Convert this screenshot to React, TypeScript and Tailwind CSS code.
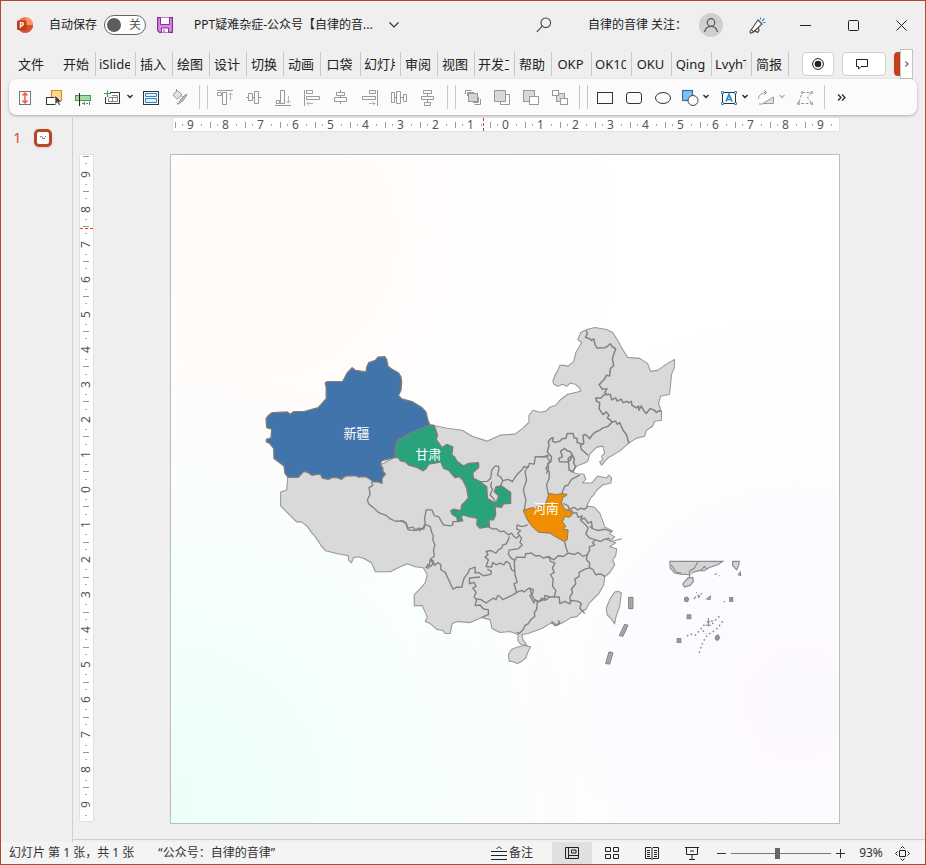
import type { ReactNode } from "react";

const tabs = [
  { label: "文件", width: "w-[54px]", line: false },
  { label: "开始", width: "w-[37px]", line: true },
  { label: "iSlide", width: "w-10", line: true },
  { label: "插入", width: "w-[37px]", line: true },
  { label: "绘图", width: "w-[37px]", line: true },
  { label: "设计", width: "w-[37px]", line: true },
  { label: "切换", width: "w-[37px]", line: true },
  { label: "动画", width: "w-[37px]", line: true },
  { label: "口袋", width: "w-10", line: true },
  { label: "幻灯片", width: "w-10", line: true },
  { label: "审阅", width: "w-[37px]", line: true },
  { label: "视图", width: "w-[37px]", line: true },
  { label: "开发工具", width: "w-10", line: true },
  { label: "帮助", width: "w-[37px]", line: true },
  { label: "OKP", width: "w-10", line: true },
  { label: "OK10", width: "w-10", line: true },
  { label: "OKU", width: "w-10", line: true },
  { label: "Qing", width: "w-10", line: true },
  { label: "LvyhT", width: "w-10", line: true },
  { label: "简报", width: "w-[37px]", line: true },
];

const marks = [9, 8, 7, 6, 5, 4, 3, 2, 1, 0, 1, 2, 3, 4, 5, 6, 7, 8, 9];

function Tool({ label, narrow, children }: { label: string; narrow?: boolean; children: ReactNode }) {
  return (
    <button aria-label={label} className={`flex h-7 shrink-0 items-center justify-center ${narrow ? "w-[25px]" : "w-[29px]"}`}>
      <svg width="17" height="18" viewBox="0 0 17 18" fill="none" stroke="#999999">
        {children}
      </svg>
    </button>
  );
}

function Caret({ label, color = "#222222" }: { label: string; color?: string }) {
  return (
    <button aria-label={label} className="mr-0.5 -ml-0.5 flex h-7 w-2.5 shrink-0 items-center justify-center">
      <svg width="8" height="6" viewBox="0 0 8 6" fill="none" stroke={color} strokeWidth="1.3">
        <path d="M1.5 1 L4 3.5 L6.5 1" />
      </svg>
    </button>
  );
}

function DoubleLine() {
  return (
    <div className="flex w-4 shrink-0 justify-center gap-[7px]">
      <div className="h-6 w-px bg-[#c8c8c8]" />
      <div className="h-6 w-px bg-[#c8c8c8]" />
    </div>
  );
}

function TitleBar() {
  return (
    <header className="flex h-12 items-center pl-4 text-xs text-[#222222]">
      <svg width="16" height="16" viewBox="0 0 16 16" className="shrink-0">
        <circle cx="8.2" cy="8" r="7.8" fill="#ed6c47" />
        <path d="M8 .2 A7.8 7.8 0 0 1 16 8 H8z" fill="#ff8f6b" />
        <path d="M.6 8 H16 A7.8 7.8 0 0 1 1 11z" fill="#d35230" />
        <rect x="0" y="3.5" width="9.5" height="9.5" rx="1" fill="#c13b1b" />
        <text x="2.2" y="11" fontSize="8" fontWeight="700" fill="white">P</text>
      </svg>
      <span id="autosave" className="ml-4 shrink-0">自动保存</span>
      <button
        role="switch"
        aria-checked="false"
        aria-labelledby="autosave"
        className="ml-[7px] flex h-5 w-[42px] shrink-0 items-center justify-between rounded-full border border-[#666666] bg-white pr-1 pl-0.5 text-xs leading-4"
      >
        <span className="size-3.5 rounded-full bg-[#5d5d5d]" />
        <span className="text-[#555555]">关</span>
      </button>
      <button aria-label="保存" className="ml-[11px] shrink-0">
        <svg width="16" height="16" viewBox="0 0 16 16" fill="none" stroke="#8e2a9c">
          <path d="M.6 .6 H15.4 V15.4 H2.6 L.6 13.4z" fill="#d58fd8" strokeWidth="1.2" />
          <path d="M3.5 .6 V7.5 H12.5 V.6" fill="white" />
          <path d="M4.5 15.4 V11 H11.5 V15.4" fill="white" />
          <path d="M7 12.5 V15" />
        </svg>
      </button>
      <button className="ml-[21px] flex items-center gap-4 whitespace-nowrap">
        PPT疑难杂症-公众号【自律的音...
        <svg width="10" height="6" viewBox="0 0 10 6" fill="none" stroke="#333333" strokeWidth="1.2">
          <path d="M.5 .5 L5 5 L9.5 .5" />
        </svg>
      </button>
      <button aria-label="搜索" className="mr-9 ml-auto shrink-0">
        <svg width="16" height="16" viewBox="0 0 16 16" fill="none" stroke="#444444" strokeWidth="1.1">
          <circle cx="9.8" cy="5.8" r="4.8" />
          <path d="M6.3 9.2 L.8 14.8" />
        </svg>
      </button>
      <span className="shrink-0">自律的音律 关注：</span>
      <button aria-label="账户" className="ml-3 flex size-6 shrink-0 items-center justify-center rounded-full bg-[#d0d0d0]">
        <svg width="16" height="16" viewBox="0 0 16 16" fill="none" stroke="#555555" strokeWidth="1.2">
          <circle cx="8" cy="5.5" r="3.8" />
          <path d="M1.5 15 C2.5 11 5 9.3 8 9.3 S13.5 11 14.5 15" />
        </svg>
      </button>
      <button aria-label="画笔" className="ml-2.5 flex h-12 w-12 shrink-0 items-center justify-center">
        <svg width="17" height="17" viewBox="0 0 17 17" fill="none" stroke="#444444" strokeWidth="1.1">
          <path d="M9 3 L13 7 L4 15.5 L1.5 16 L1 14.5z" fill="white" />
          <path d="M2.5 13 L5 15 M5.5 13.5 L8.5 15.5 L10 13.5 L9.5 10.5" />
          <path d="M11.5 .5 V2.5 M13 4 L15.5 1.5 M14 5.5 H16.5" stroke="#2b88d8" />
        </svg>
      </button>
      <button aria-label="最小化" className="flex h-12 w-12 shrink-0 items-center justify-center">
        <svg width="11" height="11" viewBox="0 0 11 11" stroke="#222222"><path d="M0 5.5 H11" /></svg>
      </button>
      <button aria-label="最大化" className="flex h-12 w-12 shrink-0 items-center justify-center">
        <svg width="11" height="11" viewBox="0 0 11 11" fill="none" stroke="#222222"><rect x=".5" y=".5" width="10" height="10" rx="1" /></svg>
      </button>
      <button aria-label="关闭" className="flex h-12 w-12 shrink-0 items-center justify-center">
        <svg width="11" height="11" viewBox="0 0 11 11" stroke="#222222"><path d="M.5 .5 L10.5 10.5 M10.5 .5 L.5 10.5" /></svg>
      </button>
    </header>
  );
}

function Ribbon() {
  return (
    <nav className="flex h-[30px] items-center pl-1 text-[13px] leading-5 text-[#222222]">
      {tabs.map((tab) => (
        <button
          key={tab.label}
          className={`h-6 shrink-0 ${tab.width} ${tab.line ? "border-r border-[#c8c8c8]" : ""}`}
        >
          <span className="mr-[5px] ml-[3px] block overflow-hidden whitespace-nowrap">{tab.label}</span>
        </button>
      ))}
      <button aria-label="录制" className="ml-auto flex h-6 w-8 shrink-0 items-center justify-center rounded border border-[#d2d2d2] bg-white">
        <svg width="12" height="12" viewBox="0 0 12 12" fill="none" stroke="#222222">
          <circle cx="6" cy="6" r="5.4" />
          <circle cx="6" cy="6" r="3.3" fill="#222222" stroke="none" />
        </svg>
      </button>
      <button aria-label="批注" className="ml-2 flex h-6 w-11 shrink-0 items-center justify-center rounded border border-[#d2d2d2] bg-white pr-1">
        <svg width="12" height="12" viewBox="0 0 12 12" fill="none" stroke="#222222">
          <path d="M.5 1.5 H11.5 V8.5 H5 L2.5 11 V8.5 H.5z" />
        </svg>
      </button>
      <button aria-label="共享" className="ml-2 h-6 w-1.5 shrink-0 rounded-l bg-[#c43e1c]" />
      <button aria-label="更多选项卡" className="mr-3 flex h-[30px] w-[13px] shrink-0 items-center justify-center border border-[#c4c4c4] bg-white">
        <svg width="4" height="6" viewBox="0 0 4 6" fill="none" stroke="#666666" strokeWidth="1.2"><path d="M.5 .5 L3 3 L.5 5.5" /></svg>
      </button>
    </nav>
  );
}

function Toolbar() {
  return (
    <div className="mx-2 flex h-9 items-center rounded-lg bg-[#fbfbfb] pl-0.5 shadow-[0_1px_3px_rgba(0,0,0,0.28)]">
      <Tool label="高度">
        <rect x="2.5" y="3.5" width="11" height="13" stroke="#777777" />
        <path d="M8 5.5 V14.5 M5.5 7.5 L8 5 L10.5 7.5 M5.5 12.5 L8 15 L10.5 12.5" stroke="#f4573b" strokeWidth="1.5" />
      </Tool>
      <Tool label="选择窗格">
        <path d="M5.5 9 V2.5 H15.5 V12.5 H13" fill="#fcd88a" stroke="#e08a1e" strokeWidth="1.2" />
        <rect x=".5" y="9.5" width="9" height="7" stroke="#333333" fill="white" />
        <path d="M9 7 V16.5 L11.3 14.5 L13 17.5 L14.5 16.7 L13 14 H16z" fill="#444444" stroke="white" strokeWidth=".6" />
      </Tool>
      <Tool label="对齐形状">
        <rect x=".5" y="7.5" width="15" height="5" fill="#a3dba8" stroke="#3f9f57" />
        <path d="M4.5 5 V18" stroke="#222222" />
        <path d="M7 15.5 H9 M11 15.5 H13 M9.5 13.5 V17 M14.5 13.5 V17" stroke="#777777" />
      </Tool>
      <Tool label="新建幻灯片">
        <path d="M6 4.5 H15.5 V15.5 H1.5 V9" stroke="#333333" />
        <path d="M3.5 2.5 V9 M0 5.5 H7" stroke="#3f9f57" strokeWidth="1.2" />
        <path d="M4.5 10.5 V13.5 H13.5 V7.5 H8 M8.5 9.5 V13.5 M4.5 9.5 H13.500" stroke="#888888" />
      </Tool>
      <Caret label="新建幻灯片选项" />
      <Tool label="版式">
        <rect x=".5" y="3.5" width="15" height="13" stroke="#333333" />
        <path d="M2.5 5.500 H13.500 V8.500 H2.500z M2.500 10.500 H13.500 V14.500 H2.500z" fill="#e3f1fb" stroke="#2b88c8" />
      </Tool>
      <Tool label="格式刷">
        <path d="M1 6.5 L5.5 2.5 L10 7 L5 11 L1 7 M4.5 3.5 V1 M10 8 L11.5 11" fill="#e1e1e1" />
        <path d="M5 16 C7 16.5 8 14.5 7 13 L9 14.5z M8 12 L14 6 L15 7 L10 14z" fill="#bbbbbb" />
      </Tool>
      <DoubleLine />
      <Tool label="顶端对齐">
        <path d="M0 2.5 H16 M.5 4.5 H4.5 V7.5 H.5z M5.5 4.5 H9.5 V16.5 H5.5z" />
        <path d="M13.5 12 V5 M11.5 7 L13.5 5 L15.5 7" stroke="#b4b4b4" />
      </Tool>
      <Tool label="垂直居中">
        <path d="M0 9.5 H2.5 M6.5 9.5 H8.5 M12.5 9.5 H15.5 M2.5 5.5 H6.5 V12.5 H2.5z M8.5 3.5 H12.5 V15.5 H8.5z" />
      </Tool>
      <Tool label="底端对齐">
        <path d="M0 17.5 H16 M1.5 12.5 H4.5 V15.5 H1.5z M5.5 2.5 H9.5 V15.5 H5.5z" />
        <path d="M13.5 8 V15 M11.5 13 L13.5 15 L15.5 13" stroke="#b4b4b4" />
      </Tool>
      <Tool label="左对齐">
        <path d="M.5 2 V18 M2.5 2.5 H8.5 V5.5 H2.5z M2.5 8.5 H15.5 V11.5 H2.5z" />
        <path d="M9 15.5 H3 M5 13.5 L3 15.5 L5 17.5" stroke="#b4b4b4" />
      </Tool>
      <Tool label="水平居中">
        <path d="M7.5 2 V4.5 M7.5 7.5 V9.5 M7.5 14 V16 M3.5 4.5 H11.5 V7.5 H3.5z M1.5 9.5 H13.5 V13.5 H1.5z" />
      </Tool>
      <Tool label="右对齐">
        <path d="M15.5 2 V18 M7.5 2.5 H13.5 V5.5 H7.5z M.5 8.5 H13.5 V11.5 H.5z" />
        <path d="M7 15.5 H13 M11 13.5 L13 15.5 L11 17.5" stroke="#b4b4b4" />
      </Tool>
      <Tool label="横向分布">
        <path d="M.5 4.5 H3.5 V14.5 H.5z M5.5 3.5 H9.5 V15.5 H5.5z M12.5 6.5 H15.5 V13.5 H12.5z M3.5 9.5 H5.5 M9.5 9.5 H12.5" />
      </Tool>
      <Tool label="纵向分布">
        <path d="M3.5 2.5 H11.5 V5.5 H3.5z M1.5 8.5 H13.5 V11.5 H1.5z M4.5 14.5 H10.5 V17.5 H4.5z M7.5 5.5 V8.5 M7.5 11.5 V14.5" />
      </Tool>
      <DoubleLine />
      <Tool label="置于顶层">
        <path d="M.5 6 V2.5 H6.5 M2.5 8 V4.5 H9 M15.5 11 V16.5 H9.5 M13.5 9 V14.5 H8" />
        <rect x="3.5" y="5.5" width="9" height="8" fill="#d4d4d4" />
      </Tool>
      <Tool label="上移一层">
        <path d="M12 6.5 H15.5 V16.5 H6.5 V13" />
        <rect x=".5" y="2.5" width="11" height="11" fill="#d8d8d8" />
      </Tool>
      <Tool label="下移一层">
        <rect x=".5" y="2.5" width="11" height="11" fill="#d8d8d8" />
        <rect x="6.5" y="8.5" width="9" height="8" fill="white" />
      </Tool>
      <Tool label="组合">
        <rect x="4.5" y="5.5" width="8" height="8" fill="#d8d8d8" />
        <rect x=".5" y="2.5" width="6" height="5" fill="white" />
        <rect x="8.5" y="10.5" width="7" height="6" fill="white" />
      </Tool>
      <DoubleLine />
      <Tool label="矩形"><rect x=".5" y="4.5" width="15" height="11" stroke="#333333" /></Tool>
      <Tool label="圆角矩形"><rect x=".5" y="4.5" width="15" height="11" rx="2.5" stroke="#333333" /></Tool>
      <Tool label="椭圆"><ellipse cx="8" cy="10" rx="7.5" ry="5.5" stroke="#333333" /></Tool>
      <Tool label="形状" narrow>
        <rect x=".5" y="2.5" width="10" height="10" fill="#86bdec" stroke="#1f74b8" strokeWidth="1.2" />
        <circle cx="11" cy="12.5" r="5" fill="white" stroke="#444444" />
      </Tool>
      <Caret label="形状选项" />
      <div className="flex items-center pl-1">
        <Tool label="文本框" narrow>
          <rect x="1.5" y="4.5" width="13" height="11" stroke="#333333" />
          <path d="M.5 3.5 H2.5 V5.5 H.5z M13.5 3.5 H15.5 V5.5 H13.5z M.5 14.5 H2.5 V16.5 H.5z M13.5 14.5 H15.5 V16.5 H13.5z" fill="white" stroke="#2b88c8" />
          <path d="M5 13.5 L8 6.5 L11 13.5 M6 11.5 H10" stroke="#2b88c8" strokeWidth="1.7" />
        </Tool>
        <Caret label="文本框选项" />
      </div>
      <div className="flex items-center pl-0.5">
        <Tool label="旋转" narrow>
          <path d="M5 15.5 H15.5 V9z" fill="#e1e1e1" />
          <path d="M1 16 H5 M.5 11 C.5 7 4 4.5 8.5 4.5 M6 2 L8.5 4.5 L6 7" />
        </Tool>
        <Caret label="旋转选项" color="#b4b4b4" />
      </div>
      <div className="flex items-center pl-0.5">
        <Tool label="编辑顶点">
          <path d="M2 14 L5 5 M5 4.5 H14 M14 5 L10.5 9.5 L14.500 15 M4 15.5 H14" strokeDasharray="3 1.5" />
          <path d="M4 3 H6 V6 H4z M13.5 3 H16 V6 H13.5z M0 14 H3 V17 H0z M13.5 14 H16 V17 H13.5z" fill="#b4b4b4" stroke="none" />
        </Tool>
      </div>
      <div className="mx-1 h-6 w-px bg-[#c8c8c8]" />
      <button aria-label="更多命令" className="flex h-7 w-6 shrink-0 items-center justify-center">
        <svg width="9" height="7" viewBox="0 0 9 7" fill="none" stroke="#222222" strokeWidth="1.2"><path d="M1 .5 L4 3.5 L1 6.5 M5 .5 L8 3.5 L5 6.5" /></svg>
      </button>
    </div>
  );
}

function TopRuler() {
  return (
    <div className="relative flex h-[15px] border border-[#e1e1e1] bg-white pl-px text-xs text-[#555555]">
      {marks.map((n, i) => (
        <div key={i} className="grid flex-1 grid-cols-[3px_10px_7px_1fr] items-center justify-items-center">
          <span className="h-1.5 w-px bg-[#999999]" />
          <span className="h-0.5 w-px bg-[#aaaaaa]" />
          <span className="leading-3">{n}</span>
          <span className="h-0.5 w-px bg-[#aaaaaa]" />
        </div>
      ))}
      <div className="absolute inset-y-0 left-[46.6%] border-l border-dashed border-[#c43e1c]" />
    </div>
  );
}

function SideRuler() {
  return (
    <div className="relative mb-0.5 flex flex-col border border-[#e1e1e1] bg-white pr-0.5 text-xs text-[#555555]">
      {marks.map((n, i) => (
        <div key={i} className="grid flex-1 grid-rows-[3px_1fr_9px_1fr] items-center justify-items-center">
          <span className="h-px w-1.5 bg-[#999999]" />
          <span className="h-px w-0.5 bg-[#aaaaaa]" />
          <span className="-rotate-90 leading-[9px]">{n}</span>
          <span className="h-px w-0.5 bg-[#aaaaaa]" />
        </div>
      ))}
      <div className="absolute inset-x-0 top-[10.9%] border-t border-dashed border-[#e8401c]" />
    </div>
  );
}

const mainland =
  "M432 425 L447 428 L462 430 L472 436 L487 441 L500 435 L515 434 L523 428 L529 422 L529 415 L533 410 L540 412 L546 411 L550 407 L556 405 L560 400 L568 394 L581 391 L580 388 L576 384 L570 383 L567 386 L563 384 L558 386 L554 384 L553 381 L555 375 L557 372 L560 365 L565 365 L568 366 L574 361 L576 352 L582 342 L578 339 L581 332 L587 329 L595 327 L607 329 L613 332 L618 340 L623 349 L628 357 L640 358 L648 363 L651 371 L658 370 L668 363 L675 359 L675 367 L672 374 L671 385 L670 394 L661 396 L659 403 L662 412 L662 420 L655 421 L653 426 L647 430 L645 436 L637 438 L629 443 L620 451 L608 458 L602 465 L600 462 L603 460 L602 456 L605 453 L603 446 L597 447 L590 454 L588 461 L585 463 L577 466 L572 472 L578 474 L584 474 L586 479 L583 483 L592 483 L598 476 L607 478 L609 475 L612 478 L611 483 L603 485 L597 490 L594 495 L591 498 L587 506 L594 507 L600 513 L603 521 L605 527 L613 531 L610 534 L615 537 L612 540 L607 540 L616 543 L610 547 L617 549 L616 556 L613 560 L615 565 L610 573 L605 577 L604 585 L599 594 L595 598 L589 604 L586 610 L583 611 L577 617 L571 618 L565 622 L557 626 L554 623 L550 624 L542 629 L528 634 L522 635 L523 640 L527 646 L521 645 L518 641 L518 635 L510 632 L500 633 L492 629 L490 620 L482 618 L470 623 L458 622 L452 624 L450 634 L445 634 L443 631 L437 630 L430 624 L425 622 L427 618 L426 615 L422 606 L414 606 L414 595 L420 589 L425 583 L427 575 L423 568 L415 567 L407 564 L400 567 L390 572 L375 572 L371 563 L364 559 L358 557 L353 558 L351 563 L348 560 L348 556 L337 554 L325 551 L320 545 L315 537 L312 534 L307 527 L301 522 L296 522 L288 514 L280 506 L280 492 L286 490 L287 478 L290 465 L380 465 L395 457 L410 440z";

function ChinaMap() {
  return (
    <svg viewBox="170 154 670 670" className="block w-full" role="img" aria-label="中国地图">
      <g fill="#d9d9d9" stroke="#999999" strokeWidth="1.1" strokeLinejoin="round" strokeLinecap="round">
        <path d={mainland} />
        <g transform="translate(400 520) scale(.33333)" strokeWidth="3.3">
          <path d="M375 378 L392 382 L385 395 L378 415 L363 427 L352 432 L340 427 L328 425 L325 405 L335 390 L350 383z" />
        </g>
        <g transform="translate(510 460) scale(.33333)" strokeWidth="3.3">
          <path d="M315 397 L325 395 L335 400 L330 440 L318 475 L315 493 L305 478 L292 465 L290 445 L300 420z" />
          <path d="M305 245 L335 237" />
        </g>
      </g>

      {/* province borders, north-east */}
      <g transform="translate(540 315) scale(.33333)" fill="none" stroke="#828282" strokeWidth="4.5" strokeLinejoin="round">
        <path d="M140 45 L143 55 L137 66 L150 70 L155 75 L162 70 L166 88 L172 98 L195 97 L203 93 L212 85 L218 94 L228 100 L223 115 L218 130 L222 150 L212 160 L210 182 L200 180 L195 190 L178 208 L188 222 L202 220 L195 232 L203 238 L212 238 L216 254 L228 248 L232 257 L245 252 L250 262 L262 258 L268 263 L275 258 L277 270 L290 278 L297 272 L298 285 L305 272 L313 287 L320 295 L332 280 L345 285 L350 292 L357 287 L367 288" />
        <path d="M203 238 L190 240 L185 248 L168 248 L170 258 L180 262 L178 280 L190 298 L200 290 L208 300 L203 308 L218 320 L228 318 L233 328 L240 322 L250 345 L260 358 L268 385" />
        <path d="M218 320 L205 333 L190 338 L180 345 L165 352 L155 362 L150 371 L137 358 L130 360 L132 385 L122 390 L125 403 L145 420" />
        <path d="M128 387 L112 382 L112 370 L103 368 L100 355 L82 355 L78 370 L68 370 L60 378 L45 382 L38 378 L40 368 L33 370 L25 380 L28 390 L22 410 L35 425 L33 440 L24 445 L26 458 L20 475" />
        <path d="M75 400 L82 407 L92 410 L98 420 L85 430 L86 441 L60 440 L56 430 L68 425 L62 408z M98 420 L104 432 L101 442 L107 455 L100 470 L88 465 L86 440 L92 434z M0 424 L14 426 L25 422" />
      </g>

      {/* north and centre */}
      <g transform="translate(400 410) scale(.33333)" fill="none" stroke="#828282" strokeWidth="4" strokeLinejoin="round">
        <path d="M240 215 L262 214 L272 205 L275 180 L285 168 L295 168 L297 178 L292 195 L303 202 L308 212 L325 208 L337 215 L350 195 L365 180 L372 170 L385 172 L388 160 L403 162 L406 140 L430 140 L445 135" />
        <path d="M275 215 L272 230 L278 238 L270 255 L280 265 L285 275 M308 212 L300 232 M385 167 L375 185 L380 210 L370 240 L378 270 L372 305" />
        <path d="M445 135 L442 142 L450 155 L438 175 L448 185 L448 205 L440 225 L445 252 M540 195 L515 208 L505 225 L495 228 L485 252 L500 258" />
        <path d="M265 352 L280 358 L288 356 L300 365 L312 364 L325 375 L335 370 L342 380 L350 385 L360 375 M384 345 L366 350 L352 345 L350 357 L362 362 L353 370 L365 385 L360 398 L367 405 L355 417 L328 420 L325 432 L335 448" />
        <path d="M75 345 L73 325 L78 300 L95 300 L103 318 L115 320 L130 345 L150 348 L158 345 L158 335 L175 335" />
        <path d="M0 332 L18 340 L22 355 L38 352 L48 362 L55 355 L70 358 L75 345" />
      </g>

      {/* Tibet and Qinghai */}
      <g transform="translate(265 460) scale(.33333)" fill="none" stroke="#828282" strokeWidth="4" strokeLinejoin="round">
        <path d="M318 65 L322 76 L311 83 L314 103 L306 120 L310 132 L324 143 L340 158 L362 166 L375 177 L391 184 L415 183 L423 193 L428 209 L447 212 L460 206 L462 213 L475 202 L478 193" />
        <path d="M478 193 L495 200 L500 220 L504 225 L503 240 L509 255 L505 270 L507 290 L496 297 L503 312 L497 320 L488 314 L483 323" />
      </g>

      {/* south-west */}
      <g transform="translate(400 520) scale(.33333)" fill="none" stroke="#828282" strokeWidth="4.2" strokeLinejoin="round">
        <path d="M75 143 L85 145 L90 120 L98 122 L103 137 L113 128 L122 135 L122 150 L135 158 L143 175 L150 190 L158 208 L170 202 L185 203 L188 188 L192 175 L205 158 L208 148 L225 142 L225 160 L235 158 L250 168 L272 164 L274 155 L262 148" />
        <path d="M328 50 L325 60 L318 73 L308 75 L305 85 L295 90 L288 100 L270 92 L258 95 L264 105 L255 112 L265 120 L258 140 L275 142 L278 128 L288 135 L300 130 L312 135 L318 125 L328 130 L335 150 L345 155" />
        <path d="M333 115 L345 122 M240 172 L208 175 L208 192 L222 188 L228 200 L218 205 L228 218 L222 232 L230 240 L225 258 L240 256 L250 268 L265 270 L265 285 L245 293" />
        <path d="M228 238 L243 240 L258 250 L280 235 L288 240 L293 228 L300 230 L308 240 L325 232 L340 225 L350 218 L342 192 L352 188 L345 165 L343 125 L350 112 L375 113 L377 102 L395 100 L405 108 L420 108 L430 115 L450 110" />
        <path d="M350 218 L365 212 L372 217 L388 205 L400 210 L398 222 L390 228 L402 250 L405 240 L415 248 L427 235 L435 242 L450 232" />
        <path d="M412 248 L410 270 L403 277 L405 290 L393 300 L385 312 L375 318 L370 330 L358 342 L350 338" />
      </g>

      {/* south-east */}
      <g transform="translate(510 460) scale(.33333)" fill="none" stroke="#828282" strokeWidth="4.2" strokeLinejoin="round">
        <path d="M118 292 L122 305 L135 310 L128 325 L133 338 L122 345 L130 358 L128 380 L138 392 L133 412 L148 412 L150 432 L165 425 L180 433 L185 422 L205 425 L215 432 L210 445 L225 462" />
        <path d="M105 292 L118 292 L132 300 L145 288 L160 290 L175 280 L168 262 L165 245 M175 280 L195 284 L205 278 L220 290 L232 285 L240 272 L238 262 L255 255 L248 248 L258 240 L240 235 L228 222 L235 205 L228 195 L212 180 L218 168 L205 172 L200 158 L190 160 L185 150" />
        <path d="M160 130 L175 138 L178 148 L192 142 L205 150 L212 145 L225 148 L235 138 M258 240 L272 245 L285 238 L300 235 M215 178 L225 175 L235 190 L245 185 L248 205 L240 200 M245 205 L265 212 L285 208 L305 215" />
        <path d="M232 285 L230 300 L240 310 L238 325 L225 328 L208 338 L208 350 L195 358 L198 372 L185 388 L188 400 L180 412 L182 428 M238 322 L250 330 L258 345 L272 342 L285 350" />
        <path d="M60 385 L65 405 L75 422 L90 425 L105 418 L105 407 L120 412 L133 412 M125 485 L135 498 L150 490 L145 482" />
      </g>

      <g transform="translate(255 340) scale(.33333)">
        <path
          d="M31 235 L38 226 L50 217 L95 215 L103 222 L115 214 L145 214 L188 202 L212 175 L212 140 L209 128 L214 124 L262 123 L275 98 L290 82 L300 90 L332 95 L334 80 L340 67 L360 60 L368 50 L388 49 L394 58 L398 78 L412 88 L430 98 L437 110 L439 125 L437 150 L429 166 L440 176 L470 184 L500 202 L512 215 L518 240 L524 254 L475 275 L427 300 L420 325 L420 352 L378 362 L376 375 L383 385 L382 393 L390 402 L380 415 L380 430 L366 425 L355 426 L342 416 L330 410 L310 411 L300 407 L270 408 L258 418 L245 413 L230 413 L218 418 L200 414 L195 402 L185 403 L170 406 L158 398 L145 394 L128 412 L97 412 L88 400 L85 378 L72 368 L55 355 L54 325 L42 310 L32 305 L32 298 L46 293 L48 267 L33 262z"
          fill="#4174aa"
          stroke="#7d7d7d"
          strokeWidth="4"
          strokeLinejoin="round"
        />
      </g>
      <g transform="translate(400 410) scale(.33333)">
        <path
          d="M89 44 L102 46 L112 75 L108 88 L125 112 L140 103 L158 110 L155 135 L163 140 L170 153 L190 168 L205 160 L235 158 L236 172 L218 188 L220 205 L240 215 L260 230 L262 265 L282 278 L290 275 L296 257 L283 245 L288 230 L305 228 L332 248 L332 280 L310 282 L305 292 L285 290 L287 315 L280 330 L267 330 L268 350 L240 355 L230 345 L232 325 L205 320 L190 315 L183 320 L188 333 L172 334 L170 322 L155 312 L152 302 L160 298 L182 302 L185 285 L205 265 L200 235 L188 210 L178 200 L165 203 L145 180 L130 175 L122 155 L100 160 L85 162 L78 175 L68 182 L50 172 L25 165 L15 155 L0 152 L-5 144 L-15 142 L-15 115 L-8 90 L40 64z"
          fill="#29a37c"
          stroke="#7d7d7d"
          strokeWidth="4"
          strokeLinejoin="round"
        />
      </g>
      <g transform="translate(510 460) scale(.33333)">
        <path
          d="M117 100 L138 104 L155 101 L172 103 L158 115 L155 130 L165 148 L183 152 L187 165 L178 172 L165 170 L158 185 L168 200 L160 208 L175 210 L172 240 L162 245 L145 235 L120 220 L85 217 L62 195 L50 175 L40 152 L60 145 L75 142 L105 135 L112 118z"
          fill="#ee8e00"
          stroke="#8c7a50"
          strokeWidth="3"
          strokeLinejoin="round"
        />
        <path d="M357 413 H370 V447 H357z M345 494 L355 497 L340 530 L329 528z M298 577 L310 580 L300 614 L288 612z" fill="#b4b4b4" stroke="#7d7d7d" strokeWidth="3" />
        <path d="M363 415 V446 M349 498 L336 527 M303 580 L295 611" stroke="#8a8a8a" strokeWidth="2" />
      </g>

      {/* South China Sea inset */}
      <g transform="translate(650 545) scale(.33333)" fill="#d4d4d4" stroke="#8c8c8c" strokeWidth="3.5">
        <path d="M61 50 H220 L205 60 L180 68 L165 78 L150 77 L130 83 L120 90 L95 88 L75 85 L62 70z" />
        <path d="M146 50 L135 70 L120 80 L120 100 M65 60 L80 82 L95 85 M155 76 L165 65 L172 74 M250 50 H270 L268 62 L262 75 L250 62z" />
        <path d="M115 100 L130 98 L132 110 L122 122 L105 127 L100 118z" />
        <path d="M105 160 L112 157 L118 163 L114 171 L106 169z M241 159 H250 V170 H241z M113 211 H124 V222 H113z M83 282 H94 V294 H83z M199 275 L206 271 L211 280 L204 288 L198 283z" fill="#9a9a9a" />
        <path d="M267 90 L273 82 L274 92z M172 163 L183 155 L182 165z" />
        <path d="M196 90 L202 86 M208 93 H211 M133 163 L140 155 M140 144 H143 M145 150 L150 158 M153 147 H158 M146 160 L152 152 M223 171 H227 M177 220 V245 M172 232 H183 M168 242 H185" />
        <path d="M210 215 L195 230 L180 228 M220 230 L205 250 L190 262 L175 270 L165 285 L155 305 L148 330 M165 240 L150 258 L138 272 L122 268 L110 277 M188 235 L198 242 M160 258 L170 268" strokeDasharray="5 8" strokeWidth="4.5" fill="none" />
      </g>

      <g fill="white" fontSize="13" textAnchor="middle">
        <text x="356" y="438">新疆</text>
        <text x="428" y="459">甘肃</text>
        <text x="546" y="513">河南</text>
      </g>
    </svg>
  );
}

function Workspace() {
  return (
    <main className="flex flex-1">
      <aside className="flex w-18 shrink-0 items-start border-r border-[#d0d0d0] pt-3 pl-3">
        <span className="text-[15px] leading-5 text-[#d9532f]">1</span>
        <button aria-label="幻灯片 1" className="mt-0.5 ml-3 flex size-[18px] items-center justify-center rounded-[5px] border-3 border-[#b7472a] bg-white shadow">
          <svg width="8" height="6" viewBox="0 0 8 6" fill="none" stroke="#777777"><path d="M1 2 L3 1.5 L4 3.5 H6 M6 1 L7 2" /></svg>
        </button>
      </aside>
      <section className="mb-0.5 grid flex-1 grid-cols-[15px_1fr] grid-rows-[15px_auto] content-start gap-x-[76px] gap-y-[22px] border-b border-[#d0d0d0] pt-0.5 pr-[85px] pb-[15px] pl-1.5">
        <div className="col-start-2 pl-0.5">
          <TopRuler />
        </div>
        <SideRuler />
        <div className="border border-[#bcbcbc] bg-white bg-[radial-gradient(circle_at_0%_96%,#ebfff8_0%,transparent_46%),radial-gradient(circle_at_12%_12%,#fffaf7_0%,transparent_44%),radial-gradient(circle_at_94%_82%,#fcf8ff_0%,transparent_46%)]">
          <ChinaMap />
        </div>
      </section>
    </main>
  );
}

function StatusBar() {
  return (
    <footer className="flex h-[22px] items-center bg-[#f4f4f4] pl-2 text-xs whitespace-nowrap text-[#333333]">
      <span>幻灯片 第 1 张，共 1 张</span>
      <span className="ml-6">“公众号：自律的音律”</span>
      <button className="mr-[19px] ml-auto flex items-center gap-0.5">
        <svg width="16" height="16" viewBox="0 0 16 16" fill="none" stroke="#222222">
          <path d="M0 6.5 H16 M0 10.5 H16 M0 14.5 H16 M5.5 4 L8 1.5 L10.5 4" />
        </svg>
        备注
      </button>
      <button aria-label="普通视图" className="flex h-full w-10 shrink-0 items-center justify-center bg-[#e0e0e0]">
        <svg width="14" height="12" viewBox="0 0 14 12" fill="none" stroke="#222222"><path d="M.5 .5 H13.5 V11.5 H.5z M3.5 .5 V11.5 M3.5 8.5 H13.5 M6.5 3 H11 V6 H6.5z" /></svg>
      </button>
      <button aria-label="幻灯片浏览" className="flex h-full w-10 shrink-0 items-center justify-center">
        <svg width="14" height="12" viewBox="0 0 14 12" fill="none" stroke="#222222"><path d="M.5 .5 H5.5 V4.5 H.5z M8.5 .5 H13.5 V4.5 H8.5z M.5 7.5 H5.5 V11.5 H.5z M8.5 7.5 H13.5 V11.5 H8.5z" /></svg>
      </button>
      <button aria-label="阅读视图" className="flex h-full w-10 shrink-0 items-center justify-center">
        <svg width="14" height="13" viewBox="0 0 14 13" fill="none" stroke="#222222"><path d="M.5 .5 H6 L7 1.5 L8 .5 H13.5 V11.5 H8 L7 12.5 L6 11.5 H.5z M7 1.5 V12 M2 3.5 H5 M2 5.5 H5 M2 7.5 H5 M2 9.5 H5 M9 3.5 H12 M9 5.5 H12 M9 7.5 H12 M9 9.5 H12" /></svg>
      </button>
      <button aria-label="幻灯片放映" className="flex h-full w-10 shrink-0 items-center justify-center">
        <svg width="14" height="14" viewBox="0 0 14 14" fill="none" stroke="#222222"><path d="M0 1.5 H14 M1.5 1.5 V8.5 H12.5 V1.5 M5 5 H9 M7 8.5 V13.5 M4 13.5 H10" /></svg>
      </button>
      <button aria-label="缩小" className="flex w-[19px] shrink-0 justify-center">
        <svg width="9" height="9" viewBox="0 0 9 9" stroke="#333333"><path d="M0 4.5 H9" /></svg>
      </button>
      <input
        type="range"
        min="0"
        max="100"
        defaultValue="46"
        aria-label="缩放"
        className="h-3 w-[100px] shrink-0 appearance-none bg-[linear-gradient(#777777,#777777)] bg-[length:100%_1px] bg-center bg-no-repeat [&::-webkit-slider-thumb]:h-[11px] [&::-webkit-slider-thumb]:w-[5px] [&::-webkit-slider-thumb]:appearance-none [&::-webkit-slider-thumb]:bg-[#666666]"
      />
      <button aria-label="放大" className="flex w-[18px] shrink-0 justify-center">
        <svg width="9" height="9" viewBox="0 0 9 9" stroke="#333333"><path d="M0 4.5 H9 M4.5 0 V9" /></svg>
      </button>
      <button className="ml-2 w-7 shrink-0">93%</button>
      <button aria-label="适应窗口" className="mr-[15px] ml-2.5 shrink-0">
        <svg width="15" height="15" viewBox="0 0 15 15" fill="none" stroke="#222222">
          <path d="M4.5 4.5 H10.5 V10.5 H4.5z M5.5 2.5 L7.5 .5 L9.5 2.5 M5.5 12.5 L7.5 14.5 L9.5 12.5 M2.5 5.5 L.5 7.5 L2.5 9.5 M12.5 5.5 L14.5 7.5 L12.5 9.5" />
        </svg>
      </button>
    </footer>
  );
}

export default function App() {
  return (
    <div className="flex min-h-screen flex-col border border-[#b7472a] bg-[#efefef] font-['Noto_Sans','Noto_Sans_CJK_SC',sans-serif]">
      <TitleBar />
      <Ribbon />
      <Toolbar />
      <Workspace />
      <StatusBar />
    </div>
  );
}
